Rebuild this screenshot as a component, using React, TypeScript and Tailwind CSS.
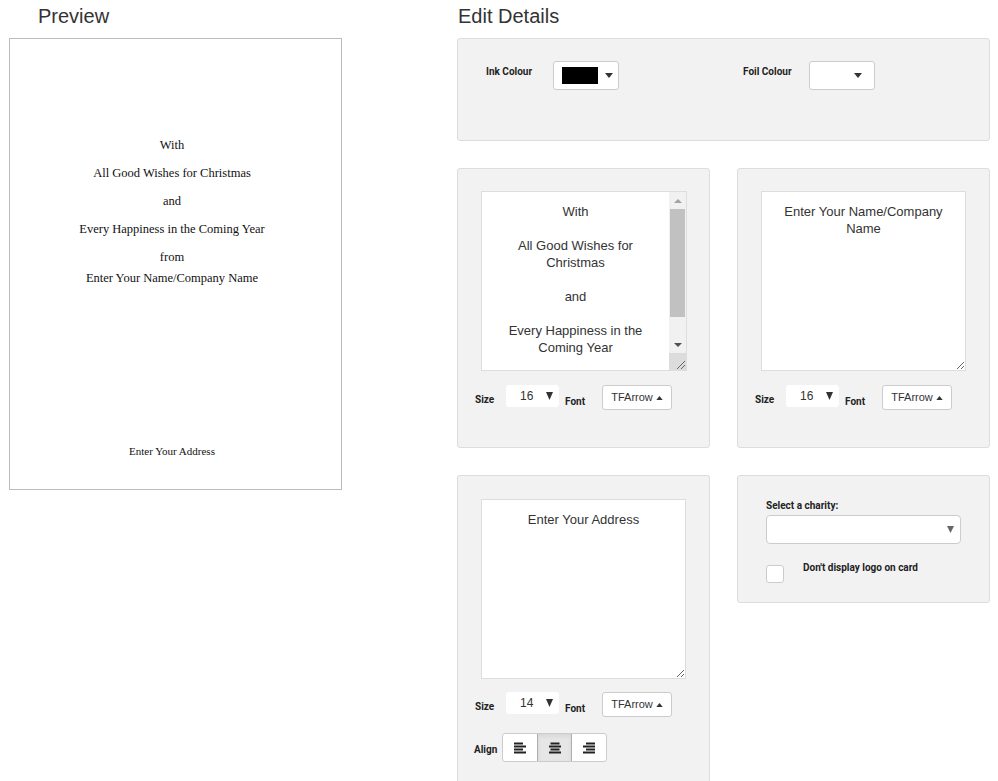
import React from "react";

const label = "font-['Roboto',sans-serif] text-[10px] font-bold text-[#222]";

function Caret({ up = false, className = "" }: { up?: boolean; className?: string }) {
  return (
    <svg width="8" height="5" viewBox="0 0 8 5" className={className}>
      {up ? <path d="M0 5 L4 0 L8 5 Z" fill="#333" /> : <path d="M0 0 L8 0 L4 5 Z" fill="#333" />}
    </svg>
  );
}

function Grip() {
  return (
    <svg width="9" height="9" viewBox="0 0 9 9">
      <path d="M9 1 L1 9 M9 5 L5 9" stroke="#666" strokeWidth="1" />
    </svg>
  );
}

function SizeRow({ size }: { size: string }) {
  return (
    <div className="flex items-start pl-[17px]">
      <span className={`${label} mt-[7px] w-[31px] text-[9px]`}>Size</span>
      <div className="flex h-[22px] w-[53px] items-center rounded-[3px] bg-white pl-[14px] pr-[6px] font-['Liberation_Sans',sans-serif] text-[12px] text-[#333]">
        <span className="flex-1">{size}</span>
        <svg width="7" height="8" viewBox="0 0 7 8">
          <path d="M0 0 L7 0 L3.5 8 Z" fill="#333" />
        </svg>
      </div>
      <span className={`${label} ml-[6px] mt-[9px] w-[37px] text-[9px]`}>Font</span>
      <button
        type="button"
        className="flex h-[25px] w-[70px] items-center justify-center gap-[3px] rounded-[3px] border border-[#ccc] bg-white font-['Liberation_Sans',sans-serif] text-[11px] text-[#333]"
      >
        TFArrow
        <Caret up className="h-[4px] w-[7px]" />
      </button>
    </div>
  );
}

function AlignIcon({ kind }: { kind: "left" | "center" | "right" }) {
  const widths = [9, 12, 9, 12];
  return (
    <svg width="12" height="12" viewBox="0 0 12 12">
      {widths.map((w, i) => {
        const x = kind === "left" ? 0 : kind === "right" ? 12 - w : (12 - w) / 2;
        return <rect key={i} x={x} y={i * 3 + 0.5} width={w} height="2" fill="#222" />;
      })}
    </svg>
  );
}

const textareaCls =
  "block h-[180px] w-[205px] resize-y border border-[#ddd] bg-white px-[8px] pt-[11px] text-center font-['Liberation_Sans',sans-serif] text-[13px] leading-[17px] text-[#333] outline-none";

function ScrollingMessage() {
  return (
    <div className="ml-[23px] flex h-[180px] w-[206px] border border-[#ddd] bg-white">
      <textarea
        readOnly
        className="block h-full flex-1 resize-none overflow-hidden px-[8px] pt-[11px] text-center font-['Liberation_Sans',sans-serif] text-[13px] leading-[17px] text-[#333] outline-none"
        defaultValue={"With\n\nAll Good Wishes for Christmas\n\nand\n\nEvery Happiness in the Coming Year\n\nfrom\n\n"}
      />
      <div className="flex w-[17px] flex-col bg-[#f1f1f1]">
        <div className="flex h-[17px] items-center justify-center">
          <svg width="8" height="4" viewBox="0 0 8 4">
            <path d="M0 4 L4 0 L8 4 Z" fill="#a3a3a3" />
          </svg>
        </div>
        <div className="mx-[1px] h-[108px] bg-[#c1c1c1]" />
        <div className="flex-1" />
        <div className="flex h-[17px] items-center justify-center">
          <svg width="8" height="4" viewBox="0 0 8 4">
            <path d="M0 0 L8 0 L4 4 Z" fill="#505050" />
          </svg>
        </div>
        <div className="flex h-[17px] items-end justify-end bg-[#dcdcdc] pb-[1px] pr-[1px]">
          <Grip />
        </div>
      </div>
    </div>
  );
}

export default function App() {
  return (
    <div className="flex min-h-[781px] w-[998px] bg-white font-['Liberation_Sans',sans-serif]">
      {/* preview column */}
      <div className="ml-[9px] w-[333px]">
        <div className="h-[38px] pl-[29px] pt-[5px] text-[20px] leading-[23px] text-[#333]">Preview</div>
        <div className="flex h-[452px] flex-col border border-[#bbb] pr-[7px] pt-[92px] text-center font-['Liberation_Serif',serif] text-[12.5px] text-[#111]">
          <div className="leading-[28px]">With</div>
          <div className="leading-[28px]">All Good Wishes for Christmas</div>
          <div className="leading-[28px]">and</div>
          <div className="leading-[28px]">Every Happiness in the Coming Year</div>
          <div className="h-[27px] leading-[28px]">from</div>
          <div className="leading-[16px]">Enter Your Name/Company Name</div>
          <div className="mt-auto pb-[31px] text-[11px] leading-[14px]">Enter Your Address</div>
        </div>
      </div>

      {/* edit column */}
      <div className="ml-[115px] w-[533px]">
        <div className="h-[38px] pl-px pt-[5px] text-[20px] leading-[23px] text-[#333]">Edit Details</div>

        <div className="flex h-[103px] items-start rounded-[3px] border border-[#ddd] bg-[#f2f2f2] pt-[22px]">
          <span className={`${label} ml-[28px] mt-[3px] w-[67px]`}>Ink Colour</span>
          <button
            type="button"
            className="flex h-[29px] w-[66px] items-center gap-[7px] rounded-[3px] border border-[#ccc] bg-white pl-[8px]"
          >
            <span className="h-[17px] w-[36px] bg-black" />
            <Caret />
          </button>
          <span className={`${label} ml-[124px] mt-[3px] w-[66px]`}>Foil Colour</span>
          <button
            type="button"
            className="flex h-[29px] w-[66px] items-center justify-end rounded-[3px] border border-[#ccc] bg-white pr-[12px]"
          >
            <Caret />
          </button>
        </div>

        <div className="mt-[27px] grid grid-cols-[253px_253px] gap-x-[27px] gap-y-[27px]">
          <div className="h-[280px] rounded-[3px] border border-[#ddd] bg-[#f2f2f2] pt-[22px]">
            <ScrollingMessage />
            <div className="mt-[14px]">
              <SizeRow size="16" />
            </div>
          </div>

          <div className="h-[280px] rounded-[3px] border border-[#ddd] bg-[#f2f2f2] pt-[22px]">
            <textarea readOnly className={`${textareaCls} ml-[23px] px-[10px]`} defaultValue="Enter Your Name/Company Name" />
            <div className="mt-[14px]">
              <SizeRow size="16" />
            </div>
          </div>

          <div className="h-[320px] rounded-t-[3px] border border-b-0 border-[#ddd] bg-[#f2f2f2] pt-[23px]">
            <textarea readOnly className={`${textareaCls} ml-[23px]`} defaultValue="Enter Your Address" />
            <div className="mt-[13px]">
              <SizeRow size="14" />
            </div>
            <div className="mt-[16px] flex items-center pl-[16px]">
              <span className={`${label} mt-[3px] w-[28px] text-[9px]`}>Align</span>
              <div className="flex h-[29px] overflow-hidden rounded-[3px] border border-[#ccc] bg-white">
                <button type="button" className="flex w-[34px] items-center justify-center">
                  <AlignIcon kind="left" />
                </button>
                <button
                  type="button"
                  className="flex w-[35px] items-center justify-center border-x border-[#adadad] bg-[#e6e6e6] shadow-[inset_0_2px_4px_rgba(0,0,0,0.08)]"
                >
                  <AlignIcon kind="center" />
                </button>
                <button type="button" className="flex w-[34px] items-center justify-center">
                  <AlignIcon kind="right" />
                </button>
              </div>
            </div>
          </div>

          <div className="h-[128px] self-start rounded-[3px] border border-[#ddd] bg-[#f2f2f2] px-[28px] pt-[24px]">
            <div className={`${label} text-[9px] leading-[12px]`}>Select a charity:</div>
            <div className="mt-[3px] flex h-[29px] w-[195px] items-center justify-end rounded-[4px] border border-[#ccc] bg-white pr-[6px]">
              <svg width="7" height="7" viewBox="0 0 7 7">
                <path d="M0 0 L7 0 L3.5 7 Z" fill="#666" />
              </svg>
            </div>
            <div className="mt-[21px] flex items-start">
              <span className="h-[18px] w-[18px] rounded-[3px] border border-[#ccc] bg-white" />
              <span className={`${label} ml-[19px] mt-[-3px] text-[9px] leading-[12px]`}>Don't display logo on card</span>
            </div>
          </div>
        </div>
      </div>
    </div>
  );
}
